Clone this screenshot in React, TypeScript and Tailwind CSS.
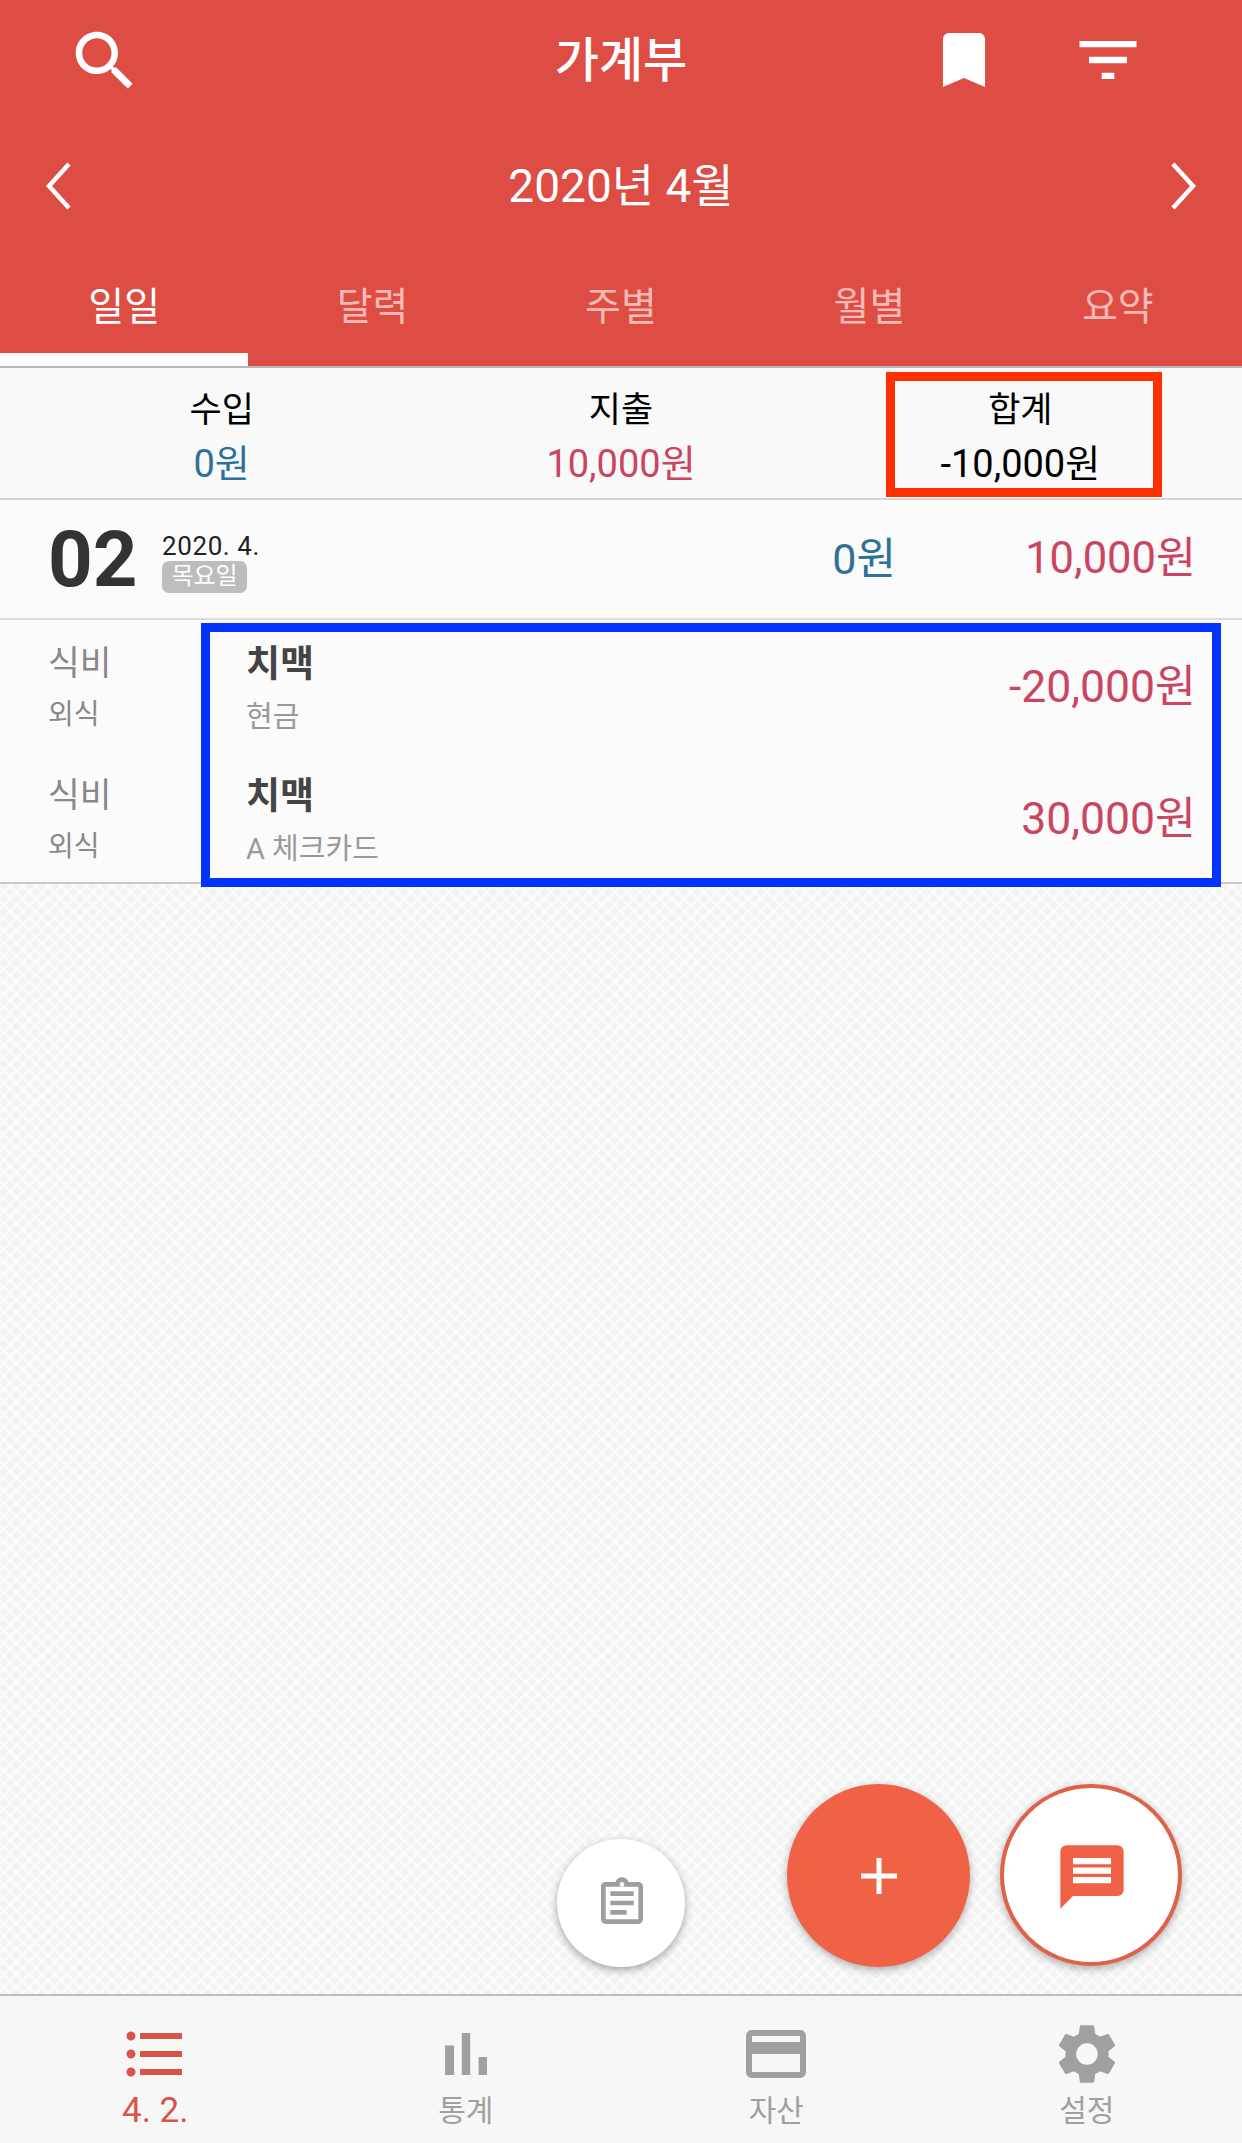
const FONT = "font-['Roboto','Noto_Sans_CJK_KR',sans-serif]";

function Icon({ d, className }: { d: string; className: string }) {
  return (
    <svg viewBox="0 0 24 24" fill="currentColor" className={className}>
      <path d={d} />
    </svg>
  );
}

const ICONS = {
  search:
    "M15.5 14h-.79l-.28-.27C15.41 12.59 16 11.11 16 9.5 16 5.91 13.09 3 9.5 3S3 5.91 3 9.5 5.91 16 9.5 16c1.61 0 3.09-.59 4.23-1.57l.27.28v.79l5 4.99L20.49 19l-4.99-5zm-6 0C7.01 14 5 11.99 5 9.5S7.01 5 9.5 5 14 7.01 14 9.5 11.99 14 9.5 14z",
  bookmark: "M17 3H7c-1.1 0-2 .9-2 2v16l7-3 7 3V5c0-1.1-.9-2-2-2z",
  filter: "M10 18h4v-2h-4v2zM3 6v2h18V6H3zm3 7h12v-2H6v2z",
  chat: "M20 2H4c-1.1 0-1.99.9-1.99 2L2 22l4-4h14c1.1 0 2-.9 2-2V4c0-1.1-.9-2-2-2zm-2 12H6v-2h12v2zm0-3H6V9h12v2zm0-3H6V6h12v2z",
  clipboard:
    "M19 3h-4.18C14.4 1.84 13.3 1 12 1s-2.4.84-2.82 2H5c-1.1 0-2 .9-2 2v14c0 1.1.9 2 2 2h14c1.1 0 2-.9 2-2V5c0-1.1-.9-2-2-2zm-7 0c.55 0 1 .45 1 1s-.45 1-1 1-1-.45-1-1 .45-1 1-1zm7 16H5V5h14v14zM7 7h10v2H7zM7 11h10v2H7zM7 15h7v2H7z",
  list: "M4 10.5c-.83 0-1.5.67-1.5 1.5s.67 1.5 1.5 1.5 1.5-.67 1.5-1.5-.67-1.5-1.5-1.5zm0-6c-.83 0-1.5.67-1.5 1.5S3.17 7.5 4 7.5 5.5 6.83 5.5 6 4.83 4.5 4 4.5zm0 12c-.83 0-1.5.68-1.5 1.5s.68 1.5 1.5 1.5 1.5-.68 1.5-1.5-.67-1.5-1.5-1.5zM7 19h14v-2H7v2zm0-6h14v-2H7v2zm0-8v2h14V5H7z",
  bars: "M5 9.2h3V19H5zM10.6 5h2.8v14h-2.8zm5.6 8H19v6h-2.8z",
  card: "M20 4H4c-1.11 0-1.99.89-1.99 2L2 18c0 1.11.89 2 2 2h16c1.11 0 2-.89 2-2V6c0-1.11-.89-2-2-2zm0 14H4v-6h16v6zm0-10H4V6h16v2z",
  gear: "M19.14 12.94c.04-.3.06-.61.06-.94 0-.32-.02-.64-.07-.94l2.03-1.58c.18-.14.23-.41.12-.61l-1.92-3.32c-.12-.22-.37-.29-.59-.22l-2.39.96c-.5-.38-1.03-.7-1.62-.94l-.36-2.54c-.04-.24-.24-.41-.48-.41h-3.84c-.24 0-.43.17-.47.41l-.36 2.54c-.59.24-1.13.57-1.62.94l-2.39-.96c-.22-.08-.47 0-.59.22L2.74 8.87c-.12.21-.08.47.12.61l2.03 1.58c-.05.3-.09.63-.09.94s.02.64.07.94l-2.03 1.58c-.18.14-.23.41-.12.61l1.92 3.32c.12.22.37.29.59.22l2.39-.96c.5.38 1.03.7 1.62.94l.36 2.54c.05.24.24.41.48.41h3.84c.24 0 .44-.17.47-.41l.36-2.54c.59-.24 1.13-.56 1.62-.94l2.39.96c.22.08.47 0 .59-.22l1.92-3.32c.12-.22.07-.47-.12-.61l-2.01-1.58zM12 15.6c-1.98 0-3.6-1.62-3.6-3.6s1.62-3.6 3.6-3.6 3.6 1.62 3.6 3.6-1.62 3.6-3.6 3.6z",
};

const TABS = ["일일", "달력", "주별", "월별", "요약"];

function Header() {
  return (
    <header className="h-[366px] bg-[#dd4d44] text-white flex flex-col">
      <div className="h-[120px] flex items-center relative">
        <Icon d={ICONS.search} className="ml-[66px] mt-[2px] w-[78px] h-[78px]" />
        <div className="flex-1" />
        <Icon d={ICONS.bookmark} className="w-[72px] h-[72px] mr-[70px]" />
        <Icon d={ICONS.filter} className="w-[76px] h-[76px] mr-[96px]" />
        <div className="absolute inset-x-0 top-[33px] text-center text-[48px] leading-[56px] font-medium">가계부</div>
      </div>
      <div className="h-[130px] flex items-center justify-between px-[40px] pt-[2px]">
        <svg viewBox="0 0 36 56" className="w-[36px] h-[56px]" fill="none" stroke="currentColor" strokeWidth="4.5">
          <path d="M29 6 9 28l20 22" />
        </svg>
        <div className="text-[46px] leading-[52px]">2020년 4월</div>
        <svg viewBox="0 0 36 56" className="w-[36px] h-[56px]" fill="none" stroke="currentColor" strokeWidth="4.5">
          <path d="M7 6l20 22L7 50" />
        </svg>
      </div>
      <nav className="grid grid-cols-5 flex-1">
        {TABS.map((tab, i) => (
          <div
            key={tab}
            className={`flex justify-center pt-[34px] text-[39px] leading-[46px] ${
              i === 0 ? "border-b-[13px] border-white" : "text-[#f6b9b5]"
            }`}
          >
            {tab}
          </div>
        ))}
      </nav>
    </header>
  );
}

function Summary() {
  const cols = [
    { label: "수입", value: "0원", color: "text-[#2d7199]" },
    { label: "지출", value: "10,000원", color: "text-[#cb4460]" },
    { label: "합계", value: "-10,000원", color: "text-black" },
  ];
  return (
    <section className="h-[134px] px-[22px] grid grid-cols-3 bg-[#f9f9f9] border-y-2 border-[#d4d4d4] border-t-[#b8b8b8]">
      {cols.map((c) => (
        <div key={c.label} className="flex flex-col items-center pt-[20px]">
          <div className="text-[35px] leading-[46px] text-black">{c.label}</div>
          <div className={`mt-[7px] text-[38px] leading-[46px] ${c.color}`}>{c.value}</div>
        </div>
      ))}
    </section>
  );
}

function DayRow() {
  return (
    <section className="h-[120px] flex items-center bg-[#fbfbfb] border-b-2 border-[#dcdcdc] pl-[48px] pr-[46px]">
      <div className="w-[114px] text-[78px] leading-none font-bold text-[#333] pt-[2px]">02</div>
      <div className="flex flex-col items-start pt-[6px]">
        <div className="text-[26px] leading-[30px] text-[#222] tracking-[0.6px]">2020. 4.</div>
        <div className="w-[85px] h-[32px] rounded-[7px] bg-[#bdbdbd] text-white text-[24px] leading-[31px] text-center">목요일</div>
      </div>
      <div className="flex-1" />
      <div className="text-[43px] leading-[50px] text-[#2d7199]">0원</div>
      <div className="w-[300px] text-right text-[43.5px] leading-[50px] text-[#cb4460]">10,000원</div>
    </section>
  );
}

function Entry({ amount, account }: { amount: string; account: string }) {
  return (
    <div className="h-[132px] flex items-center pl-[48px] pr-[46px]">
      <div className="w-[198px] flex flex-col pt-[2px]">
        <div className="text-[34.5px] leading-[44px] text-[#888]">식비</div>
        <div className="mt-[12px] text-[28px] leading-[36px] text-[#888]">외식</div>
      </div>
      <div className="flex-1 flex flex-col pt-[5px]">
        <div className="text-[37px] leading-[44px] font-bold text-[#444]">치맥</div>
        <div className="mt-[12px] text-[29px] leading-[36px] text-[#999]">{account}</div>
      </div>
      <div className="text-[44.5px] leading-[50px] text-[#cb4460] pt-[1px]">{amount}</div>
    </div>
  );
}

function Fabs() {
  return (
    <>
      <button className="absolute left-[557px] top-[1839px] w-[128px] h-[128px] rounded-full bg-white shadow-[0_3px_8px_rgba(0,0,0,0.35)] flex items-center justify-center text-[#9e9e9e]">
        <Icon d={ICONS.clipboard} className="w-[56px] h-[56px] ml-[2px]" />
      </button>
      <button className="absolute left-[787px] top-[1784px] w-[183px] h-[183px] rounded-full bg-[#f06245] shadow-[0_3px_8px_rgba(0,0,0,0.3)] flex items-center justify-center text-white">
        <svg viewBox="0 0 36 36" className="w-[36px] h-[36px]" fill="currentColor">
          <path d="M15.5 0h5v15.5H36v5H20.5V36h-5V20.5H0v-5h15.5z" />
        </svg>
      </button>
      <button className="absolute left-[1000px] top-[1784px] w-[182px] h-[182px] rounded-full bg-white border-[4px] border-[#e0604a] shadow-[0_3px_8px_rgba(0,0,0,0.3)] flex items-center justify-center text-[#f06245]">
        <Icon d={ICONS.chat} className="w-[76px] h-[76px] mt-[3px] ml-[1px]" />
      </button>
    </>
  );
}

function BottomNav() {
  const items = [
    { icon: ICONS.list, label: "4. 2.", color: "text-[#d9534a]", size: "text-[35px]" },
    { icon: ICONS.bars, label: "통계", color: "text-[#a0a0a0]", size: "text-[30px]" },
    { icon: ICONS.card, label: "자산", color: "text-[#a0a0a0]", size: "text-[30px]" },
    { icon: ICONS.gear, label: "설정", color: "text-[#a0a0a0]", size: "text-[30px]" },
  ];
  return (
    <nav className="h-[149px] grid grid-cols-4 bg-[#f7f7f7] border-t-2 border-[#bdbdbd]">
      {items.map((it) => (
        <div key={it.label} className={`flex flex-col items-center pt-[22px] ${it.color}`}>
          <Icon d={it.icon} className="w-[72px] h-[72px]" />
          <div className={`mt-[3px] leading-[36px] ${it.size}`}>{it.label}</div>
        </div>
      ))}
    </nav>
  );
}

export default function App() {
  return (
    <div className={`relative w-[1242px] h-[2143px] overflow-hidden flex flex-col ${FONT}`}>
      <Header />
      <Summary />
      <DayRow />
      <section className="h-[264px] bg-[#fbfbfb] border-b-2 border-[#c8c8c8]">
        <Entry amount="-20,000원" account="현금" />
        <Entry amount="30,000원" account="A 체크카드" />
      </section>
      <main className="flex-1 bg-[#f3f3f3] bg-[repeating-linear-gradient(45deg,transparent_0_6px,rgba(255,255,255,0.55)_6px_9px),repeating-linear-gradient(-45deg,transparent_0_6px,rgba(255,255,255,0.55)_6px_9px)]" />
      <BottomNav />
      <Fabs />
      {/* Highlight frames drawn over the summary total and the entry rows */}
      <div className="absolute left-[886px] top-[372px] w-[276px] h-[125px] border-[9px] border-[#ff3000]" />
      <div className="absolute left-[201px] top-[623px] w-[1020px] h-[264px] border-[9px] border-[#0433ff]" />
    </div>
  );
}
